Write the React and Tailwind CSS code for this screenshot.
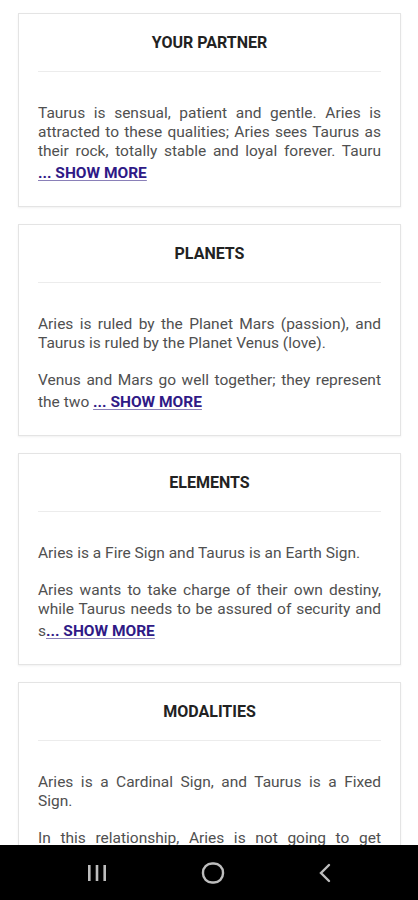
// each paragraph is given as its visual lines so the justified wrap matches the app
const cards = [
  {
    title: "YOUR PARTNER",
    paras: [],
    lines: [
      "Taurus is sensual, patient and gentle. Aries is",
      "attracted to these qualities; Aries sees Taurus as",
      "their rock, totally stable and loyal forever. Tauru",
    ],
    lead: "",
  },
  {
    title: "PLANETS",
    paras: [["Aries is ruled by the Planet Mars (passion), and", "Taurus is ruled by the Planet Venus (love)."]],
    lines: ["Venus and Mars go well together; they represent"],
    lead: "the two ",
  },
  {
    title: "ELEMENTS",
    paras: [["Aries is a Fire Sign and Taurus is an Earth Sign."]],
    lines: ["Aries wants to take charge of their own destiny,", "while Taurus needs to be assured of security and"],
    lead: "s",
  },
];

const body = "text-[15.5px] leading-[19px] text-[#505050]";

function Lines({ lines, lastPlain }) {
  return lines.map((l, i) => (
    <span
      key={i}
      className={`block ${i === lines.length - 1 && lastPlain ? "text-left" : "text-justify [text-align-last:justify]"}`}
    >
      {l}
    </span>
  ));
}

function Header({ title }) {
  return (
    <>
      <h2 className="text-center text-[16px] leading-[20px] font-bold text-[#222]">{title}</h2>
      <div className="mt-[18px] mb-[32px] h-px bg-[#ececec]" />
    </>
  );
}

function Card({ title, paras, lines, lead }) {
  return (
    <div className="bg-white border border-[#e4e4e4] shadow-[0_1px_2px_rgba(0,0,0,0.06)] px-[19px] pt-[19px] pb-[23px]">
      <Header title={title} />
      {paras.map((p, i) => (
        <p key={i} className={`${body} mb-[18px]`}>
          <Lines lines={p} lastPlain />
        </p>
      ))}
      <p className={body}>
        <Lines lines={lines} />
        <span className="block mt-[2px] leading-[20px]">
          {lead}
          <span className="font-bold text-[#2f1a86] underline decoration-[#8a80b8] underline-offset-2">... SHOW MORE</span>
        </span>
      </p>
    </div>
  );
}

function NavBar() {
  return (
    <div className="fixed bottom-0 left-0 right-0 h-[55px] bg-black flex items-center justify-around px-[40px]">
      <svg width="22" height="18" viewBox="0 0 22 18" className="text-[#bdbdbd]">
        <rect x="2" y="1" width="2.6" height="16" fill="currentColor" />
        <rect x="9.7" y="1" width="2.6" height="16" fill="currentColor" />
        <rect x="17.4" y="1" width="2.6" height="16" fill="currentColor" />
      </svg>
      <svg width="24" height="22" viewBox="0 0 24 22" className="text-[#bdbdbd]">
        <rect x="2" y="1.5" width="20" height="19" rx="9" fill="none" stroke="currentColor" strokeWidth="2.4" />
      </svg>
      <svg width="14" height="20" viewBox="0 0 14 20" className="text-[#bdbdbd]">
        <path d="M11 2 L3 10 L11 18" fill="none" stroke="currentColor" strokeWidth="2.4" strokeLinecap="round" />
      </svg>
    </div>
  );
}

export default function App() {
  return (
    <div className="min-h-screen bg-white" style={{ fontFamily: "Roboto, 'Noto Sans', sans-serif" }}>
      <div className="ml-[18px] mr-[17px] pt-[13px] pb-[80px] flex flex-col gap-[17px]">
        {cards.map((c) => (
          <Card key={c.title} {...c} />
        ))}
        <div className="bg-white border border-[#e4e4e4] shadow-[0_1px_2px_rgba(0,0,0,0.06)] px-[19px] pt-[19px] pb-[22px]">
          <Header title="MODALITIES" />
          <p className={`${body} mb-[18px]`}>
            <Lines lines={["Aries is a Cardinal Sign, and Taurus is a Fixed", "Sign."]} lastPlain />
          </p>
          <p className={body}>
            <Lines
              lines={[
                "In this relationship, Aries is not going to get",
                "their own way all the time, and Taurus will have",
                "to learn to bend a little.",
              ]}
              lastPlain
            />
          </p>
        </div>
      </div>
      <NavBar />
    </div>
  );
}
